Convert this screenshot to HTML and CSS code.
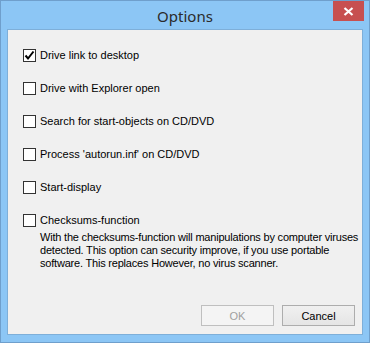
FILE: index.html
```html
<!DOCTYPE html>
<html>

	<head>
		<meta charset="UTF-8">
		<title>Options</title>
		<link rel="stylesheet" href="styles.css">
	</head>

	<body>
		<div class="window">
			<div class="caption">
				<span class="caption-title">Options</span>
				<div class="caption-close">
					<svg width="11" height="9" viewBox="0 0 11 9">
						<path d="M1.5 1 L9.5 8 M9.5 1 L1.5 8" stroke="#fff" stroke-width="2.2" fill="none" />
					</svg>
				</div>
			</div>
			<div class="client">
				<div class="options">
					<label class="item">
						<span class="box checked">
							<svg width="11" height="11" viewBox="0 0 11 11">
								<path d="M1.5 5.5 L4 8.5 L9.5 1.5" stroke="#000" stroke-width="2" fill="none" />
							</svg>
						</span>
						<span>Drive link to desktop</span>
					</label>
					<label class="item">
						<span class="box"></span>
						<span>Drive with Explorer open</span>
					</label>
					<label class="item">
						<span class="box"></span>
						<span>Search for start-objects on CD/DVD</span>
					</label>
					<label class="item">
						<span class="box"></span>
						<span>Process 'autorun.inf' on CD/DVD</span>
					</label>
					<label class="item">
						<span class="box"></span>
						<span>Start-display</span>
					</label>
					<div class="group">
						<label class="item">
							<span class="box"></span>
							<span>Checksums-function</span>
						</label>
						<p class="desc">With the checksums-function will manipulations by computer viruses<br>detected. This option can security improve, if you use portable<br>software. This replaces However, no virus scanner.</p>
					</div>
				</div>
				<div class="buttons">
					<button class="btn" disabled>OK</button>
					<button class="btn">Cancel</button>
				</div>
			</div>
		</div>
	</body>

</html>
```

FILE: styles.css
```css
body {
	margin: 0;
	font-family: "Liberation Sans", Arial, sans-serif;
}

.window {
	width: 370px;
	height: 343px;
	box-sizing: border-box;
	background: #8cc6f5;
	border: 1px solid #6f9fcc;
	display: flex;
	flex-direction: column;
	padding: 0 6px 7px 6px;
}

.caption {
	height: 28px;
	position: relative;
	display: flex;
	justify-content: center;
	align-items: center;
}

.caption-title {
	font-family: "Noto Sans", "Open Sans", sans-serif;
	font-size: 15px;
	color: #2b2b2b;
	margin-top: 1px;
}

.caption-close {
	position: absolute;
	top: 0;
	right: -1px;
	width: 31px;
	height: 20px;
	background: #c75050;
	display: flex;
	justify-content: center;
	align-items: center;
}

.client {
	flex: 1;
	background: #f0f0f0;
	border: 1px solid #7eafd9;
	display: flex;
	flex-direction: column;
	padding: 19px 7px 8px 15px;
	font-size: 11px;
	color: #000;
}

.options {
	display: flex;
	flex-direction: column;
	gap: 20px;
}

.item {
	display: flex;
	align-items: center;
	height: 13px;
	gap: 4px;
	line-height: 13px;
}

.box {
	width: 13px;
	height: 13px;
	box-sizing: border-box;
	border: 1px solid #333;
	background: #fff;
	display: flex;
	justify-content: center;
	align-items: center;
}

.desc {
	margin: 4px 0 0 17px;
	line-height: 13px;
	white-space: nowrap;
	letter-spacing: -0.2px;
}

.buttons {
	margin-top: auto;
	display: flex;
	justify-content: flex-end;
	gap: 8px;
}

.btn {
	width: 73px;
	height: 21px;
	font-family: "Liberation Sans", Arial, sans-serif;
	font-size: 11px;
	color: #000;
	border: 1px solid #adadad;
	background: linear-gradient(#f0f0f0, #e5e5e5);
	padding: 0;
}

.btn:disabled {
	color: #a0a0a0;
	border-color: #bfbfbf;
	background: #f4f4f4;
}
```
